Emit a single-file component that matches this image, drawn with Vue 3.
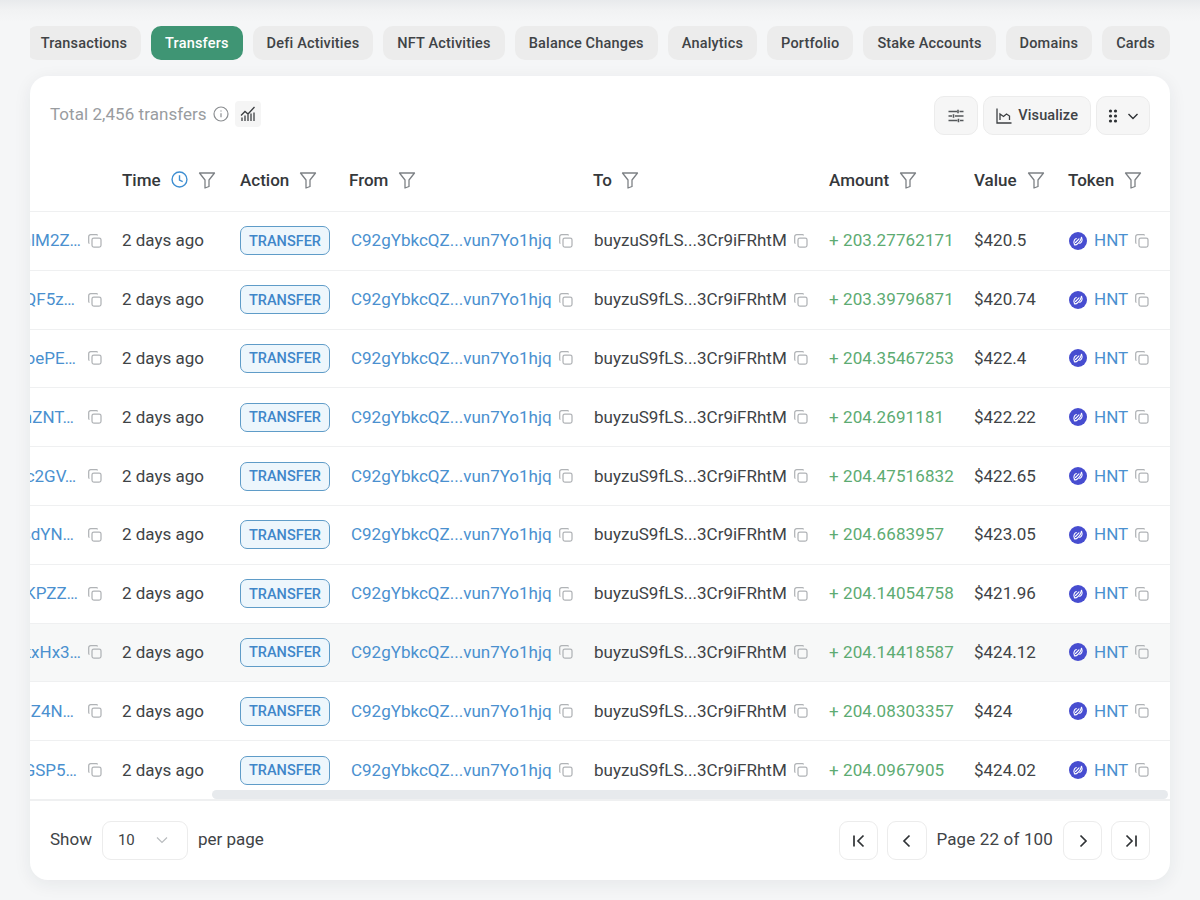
<script setup>
const tabs = ['Transactions','Transfers','Defi Activities','NFT Activities','Balance Changes','Analytics','Portfolio','Stake Accounts','Domains','Cards']
const rows = [
  { sig: '5kTqhlM2Z…', end: 0, amount: '+ 203.27762171', value: '$420.5' },
  { sig: '3vNbwQF5z…', end: 6, amount: '+ 203.39796871', value: '$420.74' },
  { sig: '2RxyoePE…', end: 5, amount: '+ 204.35467253', value: '$422.4' },
  { sig: '4hGmZNT…', end: 7, amount: '+ 204.2691181', value: '$422.22' },
  { sig: '5wLac2GV…', end: 5, amount: '+ 204.47516832', value: '$422.65' },
  { sig: '3JpsdYN…', end: 7, amount: '+ 204.6683957', value: '$423.05' },
  { sig: '2BfuKPZZ…', end: 3, amount: '+ 204.14054758', value: '$421.96' },
  { sig: '4YdkxHx3…', end: 0, amount: '+ 204.14418587', value: '$424.12' },
  { sig: '5MenZ4N…', end: 7, amount: '+ 204.08303357', value: '$424' },
  { sig: '3CvtGSP5…', end: 4, amount: '+ 204.0967905', value: '$424.02' },
]
const headers = [
  { label: '', filter: false },
  { label: 'Time', filter: true, clock: true },
  { label: 'Action', filter: true },
  { label: 'From', filter: true },
  { label: 'To', filter: true },
  { label: 'Amount', filter: true },
  { label: 'Value', filter: true },
  { label: 'Token', filter: true },
]
</script>

<template>
  <div class="page">
    <nav class="tabs">
      <button v-for="t in tabs" :key="t" class="tab" :class="{ active: t === 'Transfers' }">{{ t }}</button>
    </nav>
    <section class="card">
      <header class="toolbar">
        <div class="total">
          <span class="totaltext">Total 2,456 transfers</span>
          <svg class="info" viewBox="0 0 16 16" fill="none" stroke="currentColor" stroke-width="1.2"><circle cx="8" cy="8" r="7"/><path d="M8 7.2v4M8 4.6v1"/></svg>
          <span class="chartbox">
            <svg viewBox="0 0 16 16" width="16" height="16" fill="none" stroke="#3c3f42" stroke-width="1.3"><path d="M2 15v-3.500M5 15V9.500M8 15V8.500M11 15V7.500M14 15V6.500"/><path d="M1 9.500 5 5.500l3 2.500 6.500-7"/></svg>
          </span>
        </div>
        <div class="actions">
          <button class="tool square">
            <svg viewBox="0 0 16 16" width="16" height="16" fill="none" stroke="#55585b" stroke-width="1.3"><path d="M.5 3.500h8.500M11.500 3.500h4M.5 8h3.500M7 8h8.500M.5 12.500h9M12 12.500h3.500"/><path d="M10 1.800v3.400M5.500 6.300v3.400M10.500 10.800v3.400" stroke-width="1.600"/></svg>
          </button>
          <button class="tool">
            <svg viewBox="0 0 16 16" width="16" height="16" fill="none" stroke="#3c3f42" stroke-width="1.3"><path d="M1 .5v14.500h14.500"/><path d="M4 12V6l3.500 2.500L10.500 6l3 2v4"/></svg>
            <span>Visualize</span>
          </button>
          <button class="tool menu">
            <svg viewBox="0 0 10 16" width="10" height="16" fill="#2f3235"><circle cx="2.500" cy="3" r="1.600"/><circle cx="7.500" cy="3" r="1.600"/><circle cx="2.500" cy="8" r="1.600"/><circle cx="7.500" cy="8" r="1.600"/><circle cx="2.500" cy="13" r="1.600"/><circle cx="7.500" cy="13" r="1.600"/></svg>
            <svg viewBox="0 0 12 12" width="12" height="12" fill="none" stroke="#2f3235" stroke-width="1.400"><path d="m1.500 4 4.500 4.500L10.500 4"/></svg>
          </button>
        </div>
      </header>

      <div class="table">
        <div class="row head">
          <div v-for="(h, i) in headers" :key="i" class="th">
            <span>{{ h.label }}</span>
            <svg v-if="h.clock" class="clock" viewBox="0 0 16 16" fill="none" stroke="#3f8fd2" stroke-width="1.300"><circle cx="8" cy="8" r="7"/><path d="M8 4v4.500l3 1.500"/></svg>
            <svg v-if="h.filter" class="filter" viewBox="0 0 18 18" fill="none" stroke="#7d8185" stroke-width="1.300" stroke-linejoin="round"><path d="M1.500 2h15L11 9v6.500l-4 1.500V9z"/></svg>
          </div>
        </div>
        <div v-for="(r, i) in rows" :key="i" class="row" :class="{ hover: i === 7 }">
          <div class="td sig">
            <span class="link nowrap" :style="{ marginRight: r.end + 'px' }">{{ r.sig }}</span>
            <svg class="copy" viewBox="0 0 14 14" fill="none" stroke="#b0b3b6" stroke-width="1.250"><rect x="4" y="4" width="9" height="9" rx="1.800"/><path d="M9.500 1.500a1 1 0 0 0-1-.8H2.700a2 2 0 0 0-2 2v5.800a1 1 0 0 0 .8 1"/></svg>
          </div>
          <div class="td">2 days ago</div>
          <div class="td"><span class="badge">TRANSFER</span></div>
          <div class="td from">
            <span class="link">C92gYbkcQZ...vun7Yo1hjq</span>
            <svg class="copy" viewBox="0 0 14 14" fill="none" stroke="#b0b3b6" stroke-width="1.250"><rect x="4" y="4" width="9" height="9" rx="1.800"/><path d="M9.500 1.500a1 1 0 0 0-1-.8H2.700a2 2 0 0 0-2 2v5.800a1 1 0 0 0 .8 1"/></svg>
          </div>
          <div class="td">
            <span>buyzuS9fLS...3Cr9iFRhtM</span>
            <svg class="copy" viewBox="0 0 14 14" fill="none" stroke="#b0b3b6" stroke-width="1.250"><rect x="4" y="4" width="9" height="9" rx="1.800"/><path d="M9.500 1.500a1 1 0 0 0-1-.8H2.700a2 2 0 0 0-2 2v5.800a1 1 0 0 0 .8 1"/></svg>
          </div>
          <div class="td amount">{{ r.amount }}</div>
          <div class="td">{{ r.value }}</div>
          <div class="td token">
            <svg class="hnt" viewBox="0 0 18 18"><circle cx="9" cy="9" r="9" fill="#474dd0"/><g fill="none" stroke="#fff" stroke-width="1.100" stroke-linecap="round"><path d="M7.300 6.600A3.600 3.600 0 0 0 5.700 12.300"/><path d="M10.700 11.400A3.600 3.600 0 0 0 12.300 5.700"/><path d="M5.300 12.700c1.500.5 2.700-.4 3.500-1.200l2-2.200c.8-.9 1.300-2.400 1.900-4"/><path d="M6.500 10.500 10 6.800"/></g></svg>
            <span class="link">HNT</span>
            <svg class="copy" viewBox="0 0 14 14" fill="none" stroke="#b0b3b6" stroke-width="1.250"><rect x="4" y="4" width="9" height="9" rx="1.800"/><path d="M9.500 1.500a1 1 0 0 0-1-.8H2.700a2 2 0 0 0-2 2v5.800a1 1 0 0 0 .8 1"/></svg>
          </div>
        </div>
        <div class="scrollthumb"></div>
      </div>

      <footer class="foot">
        <div class="show">
          <span class="lift">Show</span>
          <div class="select">
            <span>10</span>
            <svg viewBox="0 0 12 12" width="12" height="12" fill="none" stroke="#b9bcbf" stroke-width="1.200"><path d="m1 3.500 5 5 5-5"/></svg>
          </div>
          <span class="lift">per page</span>
        </div>
        <div class="pager">
          <button class="pg"><svg viewBox="0 0 14 14" width="14" height="14" fill="none" stroke="#2f3235" stroke-width="1.700"><path d="M2 1.500v11M11.500 1.500 6 7l5.500 5.500"/></svg></button>
          <button class="pg wide"><svg viewBox="0 0 14 14" width="14" height="14" fill="none" stroke="#2f3235" stroke-width="1.700"><path d="M9.500 1.500 4 7l5.500 5.500"/></svg></button>
          <span class="pagetext lift">Page 22 of 100</span>
          <button class="pg"><svg viewBox="0 0 14 14" width="14" height="14" fill="none" stroke="#2f3235" stroke-width="1.700"><path d="M4.500 1.500 10 7l-5.500 5.500"/></svg></button>
          <button class="pg"><svg viewBox="0 0 14 14" width="14" height="14" fill="none" stroke="#2f3235" stroke-width="1.700"><path d="M12 1.500v11M2.500 1.500 8 7l-5.500 5.500"/></svg></button>
        </div>
      </footer>
    </section>
  </div>
</template>

<style scoped>
.page {
  width: 1200px;
  height: 900px;
  box-sizing: border-box;
  padding: 26px 30px 20px;
  overflow: hidden;
  background: linear-gradient(#e8eaec 0, #f1f2f3 10px, #f5f6f7 22px);
  font-family: Roboto, "Liberation Sans", sans-serif;
  color: #404346;
  font-size: 17px;
}
button { font-family: inherit; cursor: pointer; }
.tabs {
  display: flex;
  gap: 10px;
  height: 34px;
  overflow: hidden;
  justify-content: flex-end;
  margin-bottom: 16px;
}
.tab {
  flex: none;
  height: 34px;
  padding: 0 14px;
  border: 0;
  border-radius: 10px;
  background: #ececec;
  color: #404346;
  font-size: 14.5px;
  font-weight: 500;
  letter-spacing: .18px;
}
.tab:last-child { padding-right: 15px; }
.tab.active { background: #3f9574; color: #fff; }
.card {
  height: 804px;
  border-radius: 18px;
  background: #fff;
  box-shadow: 0 4px 18px rgba(30, 40, 50, .07);
  overflow: hidden;
  display: flex;
  flex-direction: column;
}
.toolbar {
  height: 74px;
  flex: none;
  display: flex;
  justify-content: space-between;
  padding: 20px 20px 0;
  box-sizing: border-box;
}
.total {
  display: flex;
  align-items: center;
  height: 38px;
  padding-bottom: 2px;
  box-sizing: border-box;
  color: #999c9f;
  gap: 6px;
}
.totaltext { letter-spacing: .05px; }
.info { width: 16px; height: 16px; color: #8b8e91; }
.chartbox {
  width: 26px;
  height: 26px;
  display: flex;
  align-items: center;
  justify-content: center;
  background: #f5f5f5;
  border-radius: 4px;
}
.actions { display: flex; gap: 5px; }
.tool {
  height: 39px;
  display: flex;
  align-items: center;
  gap: 6px;
  padding: 0 12px;
  border: 1px solid #ececec;
  border-radius: 10px;
  background: #f6f6f6;
  color: #404346;
  font-size: 14.5px;
  font-weight: 500;
  letter-spacing: .1px;
}
.tool.square { width: 44px; padding: 0; justify-content: center; }
.tool.menu { width: 54px; padding: 0; justify-content: center; gap: 9px; }
.table { position: relative; flex: 1; min-height: 0; }
.row {
  display: grid;
  grid-template-columns: 92px 118px 110px 244px 235px 145px 95px 101px;
  height: 58.8px;
  box-sizing: border-box;
  border-bottom: 1px solid #eff0f1;
}
.row:last-of-type { border-bottom: 0; }
.row.head { height: 62px; font-weight: 500; color: #35383b; }
.row.hover { background: #f7f8f8; }
.th, .td {
  display: flex;
  align-items: center;
  min-width: 0;
  white-space: nowrap;
  box-sizing: border-box;
}
.th { gap: 10px; padding-bottom: 2px; }
.th:nth-child(4), .th:nth-child(8) { margin-left: -1px; }
.th:nth-child(5) { margin-left: -1px; gap: 9px; }
.td { padding-bottom: 1px; }
.clock { width: 17px; height: 17px; }
.filter { width: 18px; height: 18px; }
.sig {
  justify-content: flex-end;
  overflow: hidden;
  padding-right: 20px;
}
.nowrap { flex: none; }
.link { color: #4a90cf; }
.copy { width: 14px; height: 14px; flex: none; margin: 1px 0 0 7px; }
.badge {
  width: 90px;
  height: 29px;
  margin-top: 1px;
  box-sizing: border-box;
  display: flex;
  align-items: center;
  justify-content: center;
  padding-top: 1px;
  border: 1.5px solid #5f9cc8;
  border-radius: 7px;
  background: #edf6fc;
  color: #3f86c9;
  font-size: 14.5px;
  font-weight: 500;
}
.from { padding-left: 1px; }
.amount { color: #5dab72; letter-spacing: .1px; }
.hnt { width: 18px; height: 18px; flex: none; margin: 1px 7px 0 0; }
.scrollthumb {
  position: absolute;
  left: 182px;
  right: 2px;
  bottom: 1px;
  height: 9px;
  border-radius: 5px;
  background: #e7eaed;
}
.foot {
  height: 80px;
  flex: none;
  box-sizing: border-box;
  border-top: 1px solid #eff0f1;
  padding: 20px 20px 0;
  display: flex;
  justify-content: space-between;
  align-items: flex-start;
}
.show { display: flex; align-items: center; gap: 10px; height: 39px; }
.lift { padding-bottom: 3px; }
.select {
  width: 86px;
  height: 39px;
  box-sizing: border-box;
  border: 1px solid #ececec;
  border-radius: 9px;
  display: flex;
  align-items: center;
  justify-content: space-between;
  padding: 0 19px 1px 15px;
  font-size: 15px;
}
.pager { display: flex; align-items: center; gap: 9px; }
.pg {
  width: 39px;
  height: 39px;
  display: flex;
  align-items: center;
  justify-content: center;
  padding: 0;
  background: #fff;
  border: 1px solid #ececec;
  border-radius: 9px;
}
.pg.wide { width: 40px; }
.pagetext { white-space: nowrap; margin-right: 1px; letter-spacing: .15px; }
</style>

<style>
body { margin: 0; background: #f5f6f7; }
</style>
